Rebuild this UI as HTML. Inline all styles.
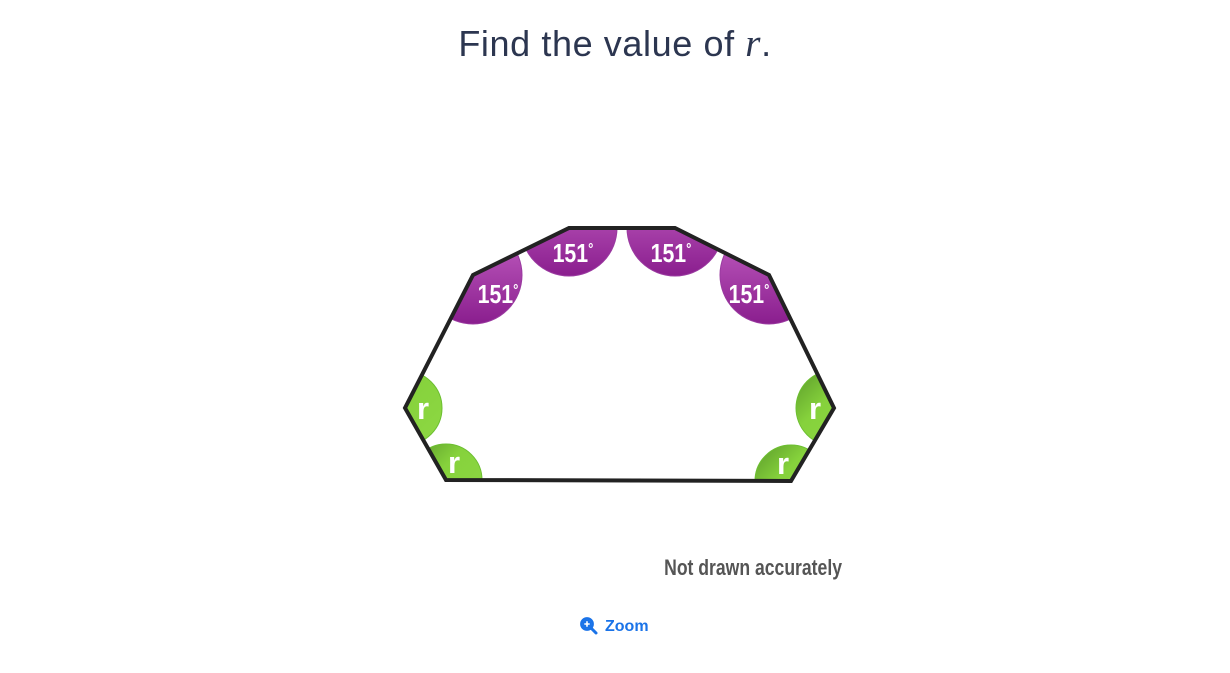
<!DOCTYPE html>
<html><head><meta charset="utf-8"><style>
html,body{margin:0;padding:0;background:#fff;width:1230px;height:673px;overflow:hidden;}
h1{position:absolute;left:0;width:1230px;top:21px;margin:0;text-align:center;font:400 36px "Liberation Sans",sans-serif;color:#2c3650;letter-spacing:0.6px}
h1 i{font-family:"Liberation Serif",serif;font-size:39px}
svg{position:absolute;left:0;top:0}
</style></head><body>
<h1>Find the value of <i>r</i>.</h1>
<svg width="1230" height="673" viewBox="0 0 1230 673">
<defs>
<clipPath id="cp"><polygon points="569,228 675,228 769,275 834,408 791,481 446,480 405,408 473,275"/></clipPath>
<linearGradient id="pg" x1="0" y1="0" x2="0" y2="1"><stop offset="0" stop-color="#c462c4"/><stop offset="1" stop-color="#8a1e8e"/></linearGradient>
<linearGradient id="gg" x1="0" y1="0" x2="1" y2="1"><stop offset="0" stop-color="#5a9a2a"/><stop offset="0.4" stop-color="#86d23c"/><stop offset="1" stop-color="#8ed844"/></linearGradient>
</defs>
<g clip-path="url(#cp)">
<g fill="url(#pg)" stroke="#9a3aa0" stroke-width="1">
<circle cx="569" cy="228" r="48"/><circle cx="675" cy="228" r="48"/>
<circle cx="769" cy="275" r="49"/><circle cx="473" cy="275" r="49"/>
</g>
<g fill="url(#gg)" stroke="#6cbf30" stroke-width="1">
<circle cx="405" cy="408" r="37"/><circle cx="834" cy="408" r="38"/>
<circle cx="446" cy="480" r="36"/><circle cx="791" cy="481" r="36"/>
</g>
</g>
<polygon points="569,228 675,228 769,275 834,408 791,481 446,480 405,408 473,275" fill="none" stroke="#222" stroke-width="4" stroke-linejoin="miter"/>
<g font-family="'Liberation Sans Narrow','Liberation Sans',sans-serif" font-weight="700" fill="#fff" font-size="26" text-anchor="middle">
<text x="573" y="262" transform="translate(573 0) scale(0.82 1) translate(-573 0)">151<tspan font-size="16" dy="-8">°</tspan></text>
<text x="671" y="262" transform="translate(671 0) scale(0.82 1) translate(-671 0)">151<tspan font-size="16" dy="-8">°</tspan></text>
<text x="498" y="303" transform="translate(498 0) scale(0.82 1) translate(-498 0)">151<tspan font-size="16" dy="-8">°</tspan></text>
<text x="749" y="303" transform="translate(749 0) scale(0.82 1) translate(-749 0)">151<tspan font-size="16" dy="-8">°</tspan></text>
<text x="423" y="419" font-size="31">r</text>
<text x="815" y="419" font-size="31">r</text>
<text x="454" y="473" font-size="31">r</text>
<text x="783" y="474" font-size="31">r</text>
</g>
<text x="842" y="575" text-anchor="end" font-family="'Liberation Sans Narrow','Liberation Sans',sans-serif" font-weight="700" font-size="22" fill="#555" transform="translate(842 0) scale(0.8 1) translate(-842 0)">Not drawn accurately</text>
<g transform="translate(580,617)">
<circle cx="7" cy="7" r="5.6" fill="none" stroke="#1a73e8" stroke-width="2.6"/>
<line x1="11" y1="11" x2="16" y2="16" stroke="#1a73e8" stroke-width="3" stroke-linecap="round"/>
<circle cx="7" cy="7" r="4.5" fill="#1a73e8"/>
<path d="M4.3 7h5.4M7 4.3v5.4" stroke="#fff" stroke-width="1.6"/>
</g>
<text x="605" y="631" font-family="'Liberation Sans',sans-serif" font-weight="700" font-size="16" fill="#1a73e8">Zoom</text>
</svg>
</body></html>
